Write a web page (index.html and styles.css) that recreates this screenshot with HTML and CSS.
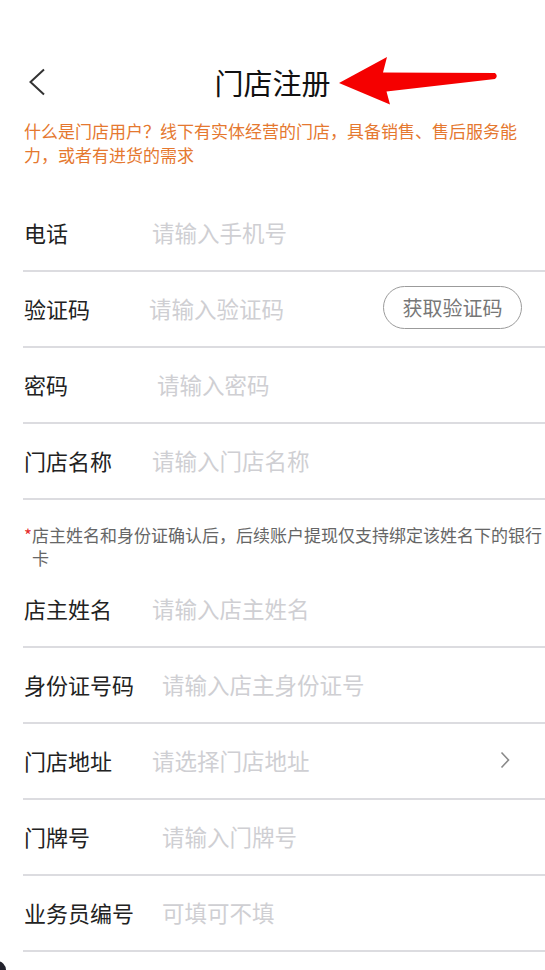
FILE: index.html
```html
<!DOCTYPE html>
<html lang="zh-CN">
<head>
    <meta charset="UTF-8">
    <meta name="viewport" content="width=device-width, initial-scale=1.0">
    <title>门店注册</title>
    <link rel="stylesheet" href="styles.css">
</head>
<body>
<div class="page">
    <header class="topbar">
        <a class="back" href="#">
            <svg width="18" height="28" viewBox="0 0 18 28"><polyline points="16,1.5 2.5,14 16,26.5" fill="none" stroke="#333" stroke-width="2"/></svg>
        </a>
        <h1 class="title">门店注册</h1>
    </header>

    <p class="intro">什么是门店用户？线下有实体经营的门店，具备销售、售后服务能力，或者有进货的需求</p>

    <form class="form">
        <div class="field">
            <label class="field-label">电话</label>
            <input class="field-input" type="tel" placeholder="请输入手机号">
        </div>
        <div class="field">
            <label class="field-label field-label--narrow">验证码</label>
            <input class="field-input" type="text" placeholder="请输入验证码">
            <button class="code-btn" type="button">获取验证码</button>
        </div>
        <div class="field">
            <label class="field-label field-label--mid">密码</label>
            <input class="field-input" type="password" placeholder="请输入密码">
        </div>
        <div class="field">
            <label class="field-label">门店名称</label>
            <input class="field-input" type="text" placeholder="请输入门店名称">
        </div>

        <div class="notice">
            <span class="notice-mark">*</span>
            <p class="notice-text">店主姓名和身份证确认后，后续账户提现仅支持绑定该姓名下的银行卡</p>
        </div>

        <div class="field">
            <label class="field-label">店主姓名</label>
            <input class="field-input" type="text" placeholder="请输入店主姓名">
        </div>
        <div class="field">
            <label class="field-label field-label--wide">身份证号码</label>
            <input class="field-input" type="text" placeholder="请输入店主身份证号">
        </div>
        <div class="field field--link">
            <label class="field-label">门店地址</label>
            <input class="field-input" type="text" placeholder="请选择门店地址" readonly>
            <svg class="field-arrow" width="10" height="18" viewBox="0 0 10 18"><polyline points="1.5,1.5 8.5,9 1.5,16.5" fill="none" stroke="#8a8a8a" stroke-width="1.6"/></svg>
        </div>
        <div class="field">
            <label class="field-label field-label--wide">门牌号</label>
            <input class="field-input" type="text" placeholder="请输入门牌号">
        </div>
        <div class="field">
            <label class="field-label field-label--wide">业务员编号</label>
            <input class="field-input" type="text" placeholder="可填可不填">
        </div>
    </form>

    <!-- annotation pointing at the title -->
    <svg class="pointer" width="545" height="120" viewBox="0 0 545 120">
        <path d="M339 83 L387 57 L383 72.5 L495 73 Q498.5 76 495 79 L386.5 91.5 L390 104.5 Z" fill="#f50000"/>
    </svg>
    <div class="corner-dot"></div>
</div>
</body>
</html>
```

FILE: styles.css
```css
body {
    margin: 0;
    background: #fff;
    font-family: "Noto Sans CJK SC", "Noto Sans", sans-serif;
    color: #222;
}
.page {
    position: relative;
    width: 545px;
    height: 970px;
    overflow: hidden;
}
.topbar {
    margin-top: 50px;
    height: 64px;
    display: grid;
    grid-template-columns: 1fr auto 1fr;
    align-items: center;
}
.back {
    justify-self: start;
    padding-left: 28px;
    display: flex;
}
.title {
    margin: 0;
    font-size: 29px;
    font-weight: 400;
    line-height: 1;
    color: #111;
}
.intro {
    margin: 5px 24px 0;
    font-size: 17px;
    line-height: 24px;
    color: #e5782f;
}
.form {
    margin-top: 29px;
}
.field {
    display: flex;
    align-items: center;
    height: 76px;
    box-sizing: border-box;
    margin-left: 23px;
    padding: 0 23px 3px 1px;
    border-bottom: 2px solid #dcdce0;
}
.field-label {
    flex: none;
    width: 128px;
    font-size: 22px;
    color: #222;
}
.field-label--narrow {
    width: 125px;
}
.field-label--mid {
    width: 133px;
}
.field-label--wide {
    width: 138px;
}
.field-input {
    flex: 1;
    min-width: 0;
    border: 0;
    outline: 0;
    padding: 0;
    background: transparent;
    font: inherit;
    font-size: 22.5px;
    color: #222;
}
.field-input::placeholder {
    color: #cfcfd3;
}
.field--link {
    padding-right: 35px;
}
.field-arrow {
    flex: none;
}
.code-btn {
    flex: none;
    width: 139px;
    height: 43px;
    border: 1.5px solid #9b9b9b;
    border-radius: 22px;
    background: #fff;
    font: inherit;
    font-size: 20px;
    color: #777;
    padding: 0;
}
.notice {
    display: flex;
    margin-left: 24px;
    padding: 23px 0 3px;
    font-size: 17px;
    line-height: 23px;
    color: #666;
}
.notice-mark {
    color: #e52b2b;
}
.notice-text {
    margin: 0;
}
.pointer {
    position: absolute;
    left: 0;
    top: 0;
    pointer-events: none;
}
.corner-dot {
    position: absolute;
    left: -12px;
    top: 961px;
    width: 18px;
    height: 18px;
    border-radius: 50%;
    background: #22222c;
}
```
